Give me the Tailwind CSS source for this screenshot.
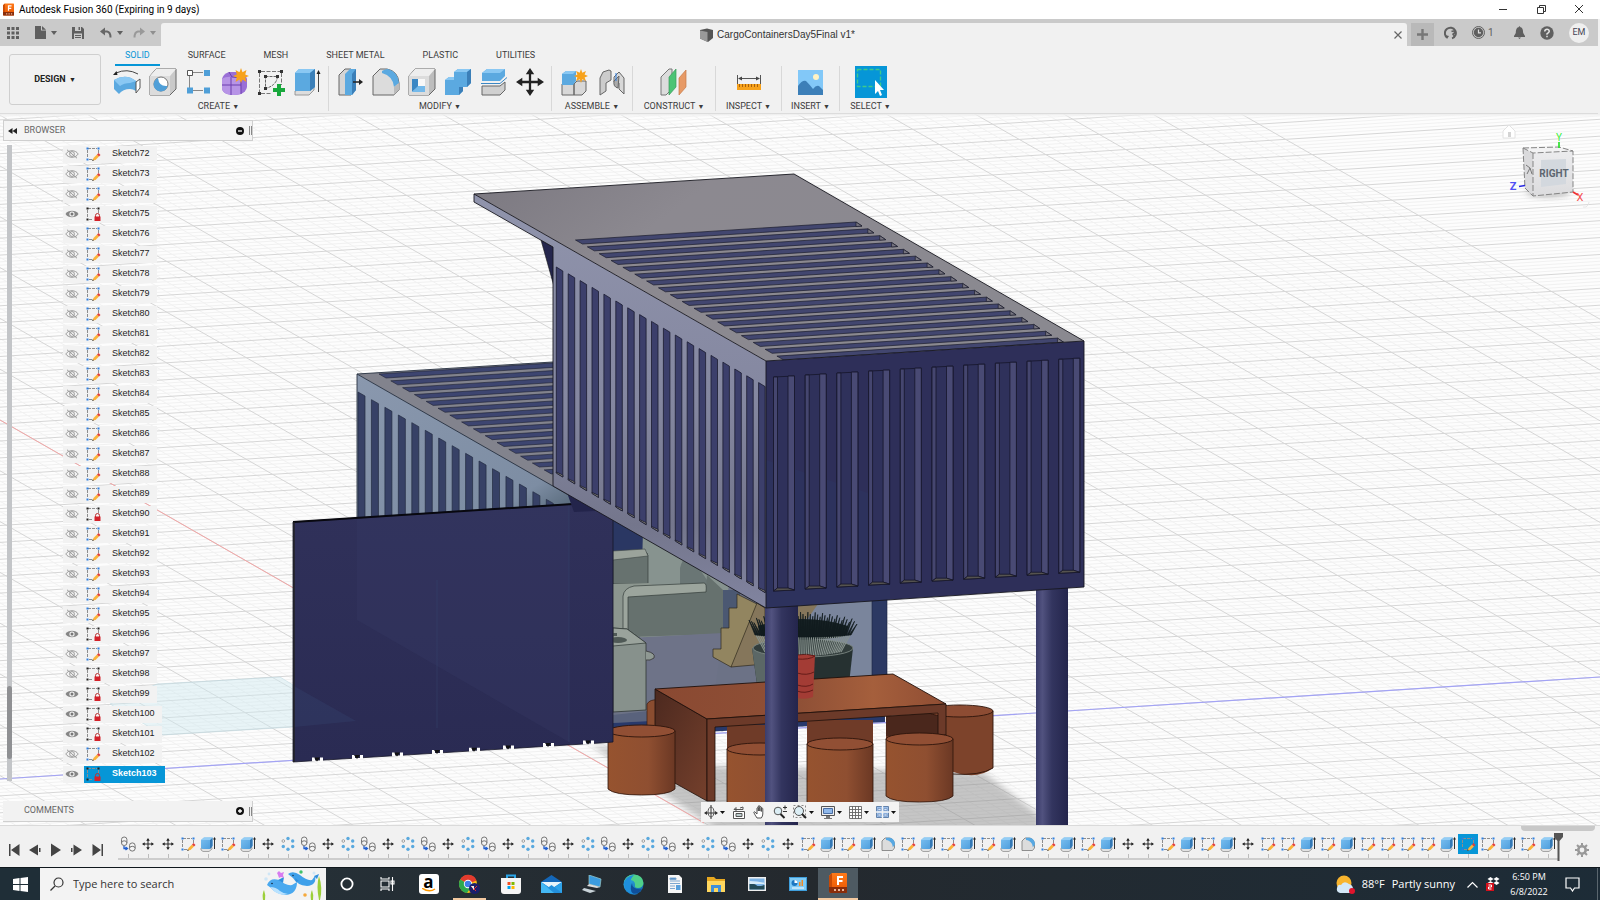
<!DOCTYPE html>
<html lang="en">
<head>
    <meta charset="UTF-8">
    <meta name="viewport" content="width=device-width, initial-scale=1.0">
    <title>Autodesk Fusion 360</title>
    <script src="https://cdn.jsdelivr.net/npm/@tailwindcss/browser@4"></script>
</head>
<body class="h-screen flex flex-col overflow-hidden bg-[#f1f1f1] font-['Roboto','Liberation_Sans',sans-serif] text-[9px] text-[#3c3c3c]">

    <!-- Icon sprite -->
    <svg width="0" height="0" class="absolute" aria-hidden="true">
        <defs>
            <linearGradient id="blueFace" x1="0" y1="0" x2="1" y2="1"><stop offset="0" stop-color="#7cc0f0"/><stop offset="1" stop-color="#4a9bdb"/></linearGradient>
            <linearGradient id="fusionOrange" x1="0" y1="0" x2="0" y2="1"><stop offset="0" stop-color="#ff7a1a"/><stop offset="1" stop-color="#e85400"/></linearGradient>
            <linearGradient id="edgeBlue" x1="0" y1="0" x2="1" y2="1"><stop offset="0" stop-color="#35c1f1"/><stop offset="1" stop-color="#0c59a4"/></linearGradient>

            <symbol id="fusion" viewBox="0 0 18 20">
                <path d="M3 0h14a1 1 0 0 1 1 1v18a1 1 0 0 1-1 1H2a2 2 0 0 1-2-2V3z" fill="url(#fusionOrange)"/>
                <path d="M0 14h18v5a1 1 0 0 1-1 1H2a2 2 0 0 1-2-2z" fill="#8a2d0a"/>
                <path d="M0 3l3-3v14H0z" fill="#c94a05"/>
                <path d="M8 3h6v2h-4v2h3.500v2H10v3H8z" fill="#fff"/>
                <path d="M5 16h2v2H5zM9 16h2v2H9zM13 16h2v2h-2z" fill="#e8b79c"/>
            </symbol>
            <symbol id="sketch" viewBox="0 0 16 16">
                <path d="M3 2.500h9M2.500 4v8M4 13.500h4M13.500 4v5" stroke="#8d8d8d" fill="none" stroke-dasharray="3 1"/>
                <path d="M1.500 1.500h2v2h-2zM12.500 1.500h2v2h-2zM1.500 12.500h2v2h-2z" fill="#2f7fe0"/>
                <path d="M7.500 14.500l1-2.500 3.500-3.500 2 2-3.500 3.500z" fill="#fbb43a"/>
                <path d="M12 8.500l1.500-1.500 2 2-1.500 1.500z" fill="#e23c39"/>
                <path d="M7 15l.8-1.800 1.200 1.200z" fill="#444"/>
            </symbol>
            <symbol id="sketchLock" viewBox="0 0 16 16">
                <path d="M3 2.500h9M2.500 4v8M4 13.500h4M13.500 4v4" stroke="#8d8d8d" fill="none" stroke-dasharray="3 1"/>
                <path d="M1.500 1.500h2v2h-2zM12.500 1.500h2v2h-2zM1.500 12.500h2v2h-2z" fill="#222"/>
                <path d="M10.500 11V9.500a2 2 0 0 1 4 0V11" fill="none" stroke="#b33" stroke-width="1"/>
                <path d="M9.500 10.500h6v4.500h-6z" fill="#d4222a"/>
            </symbol>
            <symbol id="eye" viewBox="0 0 14 10">
                <path d="M.5 5C3 .6 11 .6 13.500 5 11 9.400 3 9.400.5 5z" fill="#858585"/>
                <circle cx="7" cy="5" r="2.600" fill="#f2f2f2"/><circle cx="7" cy="5" r="1.500" fill="#777"/>
            </symbol>
            <symbol id="eyeOff" viewBox="0 0 14 10">
                <path d="M.8 5C3.500 .6 10.500 .6 13.200 5 10.500 9.400 3.500 9.400 .8 5zM2 .8l10 8.400" fill="none" stroke="#939393" stroke-width=".9"/>
                <circle cx="7" cy="5" r="2.400" fill="none" stroke="#939393" stroke-width=".9"/>
            </symbol>
            <symbol id="extrude" viewBox="0 0 16 16">
                <path d="M1 12v2l2 1.500h6l3-2.500v-1.500z" fill="#e2e2e2" stroke="#777" stroke-width=".6"/>
                <path d="M1 4l3-2.500h8.500v8.500L10 13H2.500L1 12z" fill="url(#blueFace)"/>
                <path d="M10 13V4l2.500-2.500V10z" fill="#3579b5"/>
                <path d="M1 4l3-2.500h8.500L10 4z" fill="#93cdf5"/>
                <path d="M14.500 13V3" stroke="#333" fill="none"/><path d="M13 3.500l1.500-2.500L16 3.500z" fill="#222"/>
            </symbol>
            <symbol id="move" viewBox="0 0 16 16">
                <path d="M8 2v12M2 8h12" stroke="#222" stroke-width="1.300"/>
                <path d="M8 0l2.400 3.600H5.600zM8 16l2.400-3.600H5.600zM0 8l3.600-2.400v4.800zM16 8l-3.600-2.400v4.800z" fill="#222"/>
            </symbol>
            <symbol id="pattern" viewBox="0 0 16 16">
                <g fill="#5aa9de"><circle cx="8" cy="2.500" r="1.700"/><circle cx="12.700" cy="5" r="1.700"/><circle cx="12.700" cy="10.500" r="1.700"/><circle cx="8" cy="13.300" r="1.700"/><circle cx="3.300" cy="10.500" r="1.700"/></g>
                <circle cx="3.300" cy="5" r="1.300" fill="#fff" stroke="#888" stroke-width=".8"/>
            </symbol>
            <symbol id="copy" viewBox="0 0 16 16">
                <g fill="#f4f4f4" stroke="#666" stroke-width=".9"><path d="M1.500 3.500a2.700 2.500 0 0 1 5.400 0v3.500a2.700 2.500 0 0 1-5.400 0z"/><path d="M9.500 9.500a2.800 2.600 0 0 1 5.600 0v3a2.800 2.600 0 0 1-5.600 0z"/><path d="M1.500 7a2.700 2.200 0 0 1 5.400 0M9.500 12.500a2.800 2.200 0 0 1 5.600 0"/></g>
                <path d="M4 10v2.500h3M5.500 11l2 1.500-2 1.500" stroke="#1f5fd0" fill="none" stroke-width="1.300"/>
            </symbol>
            <symbol id="fillet" viewBox="0 0 16 16">
                <path d="M2 14V5l3-3h4c3 0 5.500 3 5.500 6.500V12l-2 2.500H2z" fill="#dcdcdc" stroke="#777" stroke-width=".8"/>
                <path d="M6 1.800h3.500c3.500.4 5.500 3 5.500 7l-2.200 2.400C12.500 7 10 4.500 6 4z" fill="#57a8e2"/>
            </symbol>
        </defs>
    </svg>

    <!-- Window title bar -->
    <header class="h-[19px] shrink-0 bg-white flex items-center pl-[3px] pr-[15px] text-black text-[10px]">
        <svg class="w-[11px] h-[13px]"><use href="#fusion"/></svg>
        <h1 class="ml-[5px]">Autodesk Fusion 360 (Expiring in 9 days)</h1>
        <div class="ml-auto flex items-center gap-[26px]">
            <button aria-label="Minimize"><svg class="w-3 h-3" viewBox="0 0 12 12"><path d="M2 5.500h8" stroke="#333"/></svg></button>
            <button aria-label="Restore"><svg class="w-3 h-3" viewBox="0 0 12 12"><path d="M2.500 3.500h6v6h-6zM4.500 3V1.500h6v6H9" fill="none" stroke="#333"/></svg></button>
            <button aria-label="Close"><svg class="w-3 h-3" viewBox="0 0 12 12"><path d="M2 1l8 8M10 1l-8 8" stroke="#333"/></svg></button>
        </div>
    </header>

    <!-- Quick access + document tab -->
    <div class="h-[27px] shrink-0 bg-[#cacaca] flex mr-[2px]">
        <div class="w-[161px] flex items-center pl-[7px] text-[#5f5f5f]">
            <button aria-label="Data panel" class="w-[12px]"><svg class="w-3 h-3" viewBox="0 0 12 12" fill="currentColor"><path d="M0 0h3v3H0zM4.500 0h3v3h-3zM9 0h3v3H9zM0 4.500h3v3H0zM4.500 4.500h3v3h-3zM9 4.500h3v3H9zM0 9h3v3H0zM4.500 9h3v3h-3zM9 9h3v3H9z"/></svg></button>
            <button aria-label="File" class="ml-[15px] flex items-center gap-[5px]"><svg class="w-[12px] h-[13px]" viewBox="0 0 12 13" fill="currentColor"><path d="M1 0h6v4.500h5V13H1zM8 0l4 3.700H8z"/></svg><svg class="w-[6px] h-1" viewBox="0 0 6 4" fill="currentColor"><path d="M0 0h6L3 4z"/></svg></button>
            <button aria-label="Save" class="ml-[15px]"><svg class="w-[12px] h-3" viewBox="0 0 12 12"><path d="M0 0h10l2 2v10H0z" fill="#5f5f5f"/><path d="M3 0h6v4H3zM2 6.500h8V12H2z" fill="#cacaca"/><path d="M6.500 0h1.500v3H6.500zM3 8h6v1H3zM3 10h6v1H3z" fill="#5f5f5f"/></svg></button>
            <button aria-label="Undo" class="ml-4 flex items-center gap-[5px]"><svg class="w-3 h-3" viewBox="0 0 12 12"><path d="M3 4.500h4q3.500.5 3.500 6" fill="none" stroke="#666" stroke-width="2"/><path d="M0 4.500L5 .5v8z" fill="#666"/></svg><svg class="w-[6px] h-1" viewBox="0 0 6 4" fill="currentColor"><path d="M0 0h6L3 4z"/></svg></button>
            <button aria-label="Redo" class="ml-[10px] flex items-center gap-[5px] text-[#8f8f8f]"><svg class="w-3 h-3" viewBox="0 0 12 12"><path d="M9 4.500H5Q1.500 5 1.500 10.500" fill="none" stroke="#999" stroke-width="2"/><path d="M12 4.500L7 .5v8z" fill="#999"/></svg><svg class="w-[6px] h-1" viewBox="0 0 6 4" fill="currentColor"><path d="M0 0h6L3 4z"/></svg></button>
        </div>
        <div class="flex-1 mt-1 rounded-t-[3px] bg-[#f1f1f1] flex items-center relative">
            <div class="flex-1 flex items-center justify-center gap-1 text-[10px] text-[#333] font-['Liberation_Sans',sans-serif]">
                <svg class="w-[13px] h-[14px]" viewBox="0 0 13 14"><path d="M0 2l7-1.500 6 1.500v8l-5 4-8-3.500z" fill="#555"/><path d="M0 2.500l7.500 1.500V14L0 10.500z" fill="#9a9a9a"/></svg>
                <span>CargoContainersDay5Final v1*</span>
            </div>
            <button aria-label="Close document" class="mr-[5px]"><svg class="w-2 h-2" viewBox="0 0 8 8"><path d="M.5.5l7 7M7.500.5l-7 7" stroke="#666" stroke-width="1.200"/></svg></button>
        </div>
        <button aria-label="New document" class="ml-1 mt-1 w-[23px] bg-[#b9b9b9] flex items-center justify-center"><svg class="w-[11px] h-[11px]" viewBox="0 0 11 11"><path d="M5.500 0v11M0 5.500h11" stroke="#777" stroke-width="2.400"/></svg></button>
        <div class="flex items-center w-[164px] pl-[10px] pr-[9px] text-[#5f5f5f]">
            <button aria-label="Extensions"><svg class="w-[14px] h-[14px]" viewBox="0 0 14 14"><path d="M3 11.500A5.500 5.500 0 1 1 8 12.400" fill="none" stroke="#5f5f5f" stroke-width="2"/><path d="M7.500 5.500Q10.500 4 10.500 6.500 10.500 8 8.500 8 11 9 10 11.500" fill="none" stroke="#5f5f5f" stroke-width="1.600"/><path d="M1 9l4 1-2 3z" fill="#5f5f5f"/></svg></button>
            <button aria-label="Job status" class="ml-[14px] flex items-center gap-[3px] text-[10px]"><svg class="w-[13px] h-[13px]" viewBox="0 0 13 13"><circle cx="6.500" cy="6.500" r="6" fill="none" stroke="#5f5f5f"/><circle cx="6.500" cy="6.500" r="4.700" fill="#5f5f5f"/><path d="M6.500 3.500v3.300H9" fill="none" stroke="#ddd" stroke-width="1.200"/></svg>1</button>
            <button aria-label="Notifications" class="ml-5"><svg class="w-[11px] h-[13px]" viewBox="0 0 11 13" fill="#5f5f5f"><path d="M5.500 0l1 1.300C9 2 9 4.500 9.200 7L11 10v1H0v-1l1.800-3C2 4.500 2 2 4.500 1.300zM4 11.500h3L5.500 13z"/></svg></button>
            <button aria-label="Help" class="ml-[15px]"><svg class="w-[14px] h-[14px]" viewBox="0 0 14 14"><circle cx="7" cy="7" r="6.700" fill="#5f5f5f"/><path d="M4.700 5.500Q5 3.300 7 3.300T9.300 5.300Q9.300 6.500 7 7.800V8.800M7 9.800v1.500" fill="none" stroke="#e2e2e2" stroke-width="1.500"/></svg></button>
            <button class="ml-auto w-[20px] h-[20px] rounded-full bg-[#efefef] text-[9px] text-[#445]">EM</button>
        </div>
    </div>

    <!-- Ribbon -->
    <section class="h-[68px] shrink-0 flex border-b border-[#dcdcdc] mr-[2px]">
        <button class="ml-[9px] mt-2 w-[92px] h-[51px] border border-[#cfcfcf] rounded-[3px] text-[9px] font-bold text-[#222]">DESIGN <span class="ml-px text-[7px]">▼</span></button>
        <div class="ml-2">
            <nav class="ml-[6px] h-5 flex gap-[18px]">
                <a href="#" class="px-[10px] h-5 leading-[18px] border-b-2 border-[#0696d7] text-[#0696d7]">SOLID</a>
                <a href="#" class="px-[10px] leading-[18px]">SURFACE</a>
                <a href="#" class="px-[10px] leading-[18px]">MESH</a>
                <a href="#" class="px-[10px] leading-[18px]">SHEET METAL</a>
                <a href="#" class="px-[10px] leading-[18px]">PLASTIC</a>
                <a href="#" class="px-[10px] leading-[18px]">UTILITIES</a>
            </nav>
            <div class="flex h-[45px] text-center">
                <div class="w-[220px] border-r border-[#d8d8d8]">
                    <div class="h-8 flex items-center">
                        <button aria-label="Revolve" class="w-9 flex justify-center"><svg class="w-7 h-7" viewBox="0 0 28 28"><path d="M1 12q12-7 22 1v10q-3-2-6-2-7 0-11 5l-5-5z" fill="#5ba9e0"/><path d="M1 12q12-7 22 1l-6 2q-6 0-10 3z" fill="#8ac8f3"/><path d="M23 14l4-3v9l-4 5z" fill="#fff" stroke="#555"/><path d="M3 5q11-5 22 1" fill="none" stroke="#444"/><path d="M0 7l3.500-4 1 4z" fill="#222"/></svg></button>
                        <button aria-label="Hole" class="w-9 flex justify-center"><svg class="w-7 h-7" viewBox="0 0 28 28"><path d="M1 8l6-7h20v20l-6 6H1z" fill="#c9c9c9" stroke="#666"/><path d="M1 8h20v19H1z" fill="#dcdcdc"/><path d="M1 8l6-7h20l-6 7z" fill="#eee"/><circle cx="12" cy="16" r="7" fill="#fff" stroke="#777"/><path d="M9 10a7 7 0 1 0 9.500 8Q10 19 9 10z" fill="#4f9fd8"/></svg></button>
                        <button aria-label="Rectangular pattern" class="w-9 flex justify-center"><svg class="w-7 h-7" viewBox="0 0 28 28"><path d="M8 4.500h10M4.500 8v12M8 22.500h10" stroke="#888"/><path d="M2.500 2.500h5v5h-5z" fill="#fff" stroke="#555"/><path d="M19 2h6v6h-6zM2 19.500h6v6H2zM19 19.500h6v6h-6z" fill="#4f9fd8"/></svg></button>
                        <button aria-label="Create form" class="w-9 flex justify-center"><svg class="w-7 h-7" viewBox="0 0 28 28"><path d="M1 11q1-5 7-7h9q8 1 9 7v8q-1 5-6 7-8 2-14 0-5-2-5-6z" fill="#9a6fd6"/><path d="M1 11q5-4 18-1l1 16q-8 2-14 0-5-2-5-6z" fill="#b794e6"/><path d="M1 17h19M10 9v18M20 10v16M8 4l3 5 10 1" fill="none" stroke="#6c3fae"/><path d="M20 0l1.500 4.200L25.500 2l-1.300 4.500L28 8l-3.800 1.500L25.500 14l-4-2.500L20 15l-1.500-3.500-4 2.500 1.300-4.500L12 8l3.800-1.500L14.500 2l4 2.200z" fill="#f7a21b"/></svg></button>
                        <button aria-label="Create sketch" class="w-9 flex justify-center"><svg class="w-7 h-7" viewBox="0 0 28 28"><path d="M4 3.500h19M2.500 5v19M4 25.500h10M24.500 5v12" fill="none" stroke="#777" stroke-dasharray="4 1.500"/><path d="M8.500 8.500h12q-1 9-12 12z" fill="none" stroke="#666" stroke-dasharray="3 1"/><path d="M1 2h3v3H1zM23 2h3v3h-3zM1 24h3v3H1zM7 7h3v3H7zM19 7h3v3h-3zM7 19h3v3H7z" fill="#333"/><path d="M20 16h4v4h4v4h-4v4h-4v-4h-4v-4h4z" fill="#18a83c"/></svg></button>
                        <button aria-label="Extrude" class="w-9 flex justify-center"><svg class="w-7 h-7" viewBox="0 0 28 28"><path d="M2 23v4h14l5-5v-4z" fill="#ddd" stroke="#888" stroke-width=".8"/><path d="M2 5l4-4h16v18l-5 4H2z" fill="#5ba9e0"/><path d="M2 5l4-4h16l-5 4z" fill="#8ac8f3"/><path d="M17 5l5-4v18l-5 4z" fill="#3b7fb8"/><path d="M25.500 24V4" stroke="#444"/><path d="M23.500 6l2-4 2 4z" fill="#222"/></svg></button>
                    </div>
                    <button class="h-[17px] leading-[17px]">CREATE <span class="text-[7px]">▼</span></button>
                </div>
                <div class="w-[223px] border-r border-[#d8d8d8]">
                    <div class="h-8 flex items-center pl-[3px]">
                        <button aria-label="Press pull" class="w-9 flex justify-center"><svg class="w-7 h-7" viewBox="0 0 28 28"><path d="M3 7l6-6h6v26H3z" fill="#d5d5d5" stroke="#666"/><path d="M9 6l5-5h6v21l-4 5H9z" fill="#5ba9e0"/><path d="M16 6l4-5v21l-4 5z" fill="#3b7fb8"/><path d="M17 14h8" stroke="#222" stroke-width="1.500"/><path d="M23 11l4 3-4 3z" fill="#222"/></svg></button>
                        <button aria-label="Fillet" class="w-9 flex justify-center"><svg class="w-7 h-7" viewBox="0 0 28 28"><path d="M1 8l7-7h7q11 2 12 14v7l-5 5H1z" fill="#dcdcdc" stroke="#666"/><path d="M10 3q3-2 6-2 10 3 11 14l-5 4Q21 8 10 5z" fill="#5ba9e0"/><path d="M22 19l5-4v7l-5 5z" fill="#bbb"/></svg></button>
                        <button aria-label="Shell" class="w-9 flex justify-center"><svg class="w-7 h-7" viewBox="0 0 28 28"><path d="M1 8l6-7h20v20l-6 6H1z" fill="#bdbdbd" stroke="#666"/><path d="M1 8h20v19H1z" fill="#dcdcdc"/><path d="M1 8l6-7h20l-6 7z" fill="#eee"/><path d="M4 11h13v13H4z" fill="#f8f8f8"/><path d="M4 11h6v8l-6 5z" fill="#3b87c4"/><path d="M4 24l6-6h7v6z" fill="#74b9ea"/></svg></button>
                        <button aria-label="Combine" class="w-9 flex justify-center"><svg class="w-7 h-7" viewBox="0 0 28 28"><path d="M1 12l4-3h5V4l4-3h13v14l-4 4h-4v4l-4 4H1z" fill="#5ba9e0"/><path d="M10 4l4-3h13l-4 3zM1 12l4-3h5v3z" fill="#8ac8f3"/><path d="M23 4l4-3v14l-4 4zM15 19h4v4l-4 4z" fill="#3b7fb8"/></svg></button>
                        <button aria-label="Split body" class="w-9 flex justify-center"><svg class="w-7 h-7" viewBox="0 0 28 28"><path d="M2 5l5-4h18v7l-5 5H2z" fill="#5ba9e0"/><path d="M2 5l5-4h18l-5 4z" fill="#8ac8f3"/><path d="M1 15.500h19l7-6" fill="none" stroke="#3b87c4"/><path d="M2 18h18l5-4v8l-5 5H2z" fill="#d0d0d0" stroke="#666"/></svg></button>
                        <button aria-label="Move" class="w-9 flex justify-center"><svg class="w-7 h-7"><use href="#move"/></svg></button>
                    </div>
                    <button class="h-[17px] leading-[17px]">MODIFY <span class="text-[7px]">▼</span></button>
                </div>
                <div class="w-[81px] border-r border-[#d8d8d8]">
                    <div class="h-8 flex items-center pl-1">
                        <button aria-label="New component" class="w-9 flex justify-center"><svg class="w-7 h-7" viewBox="0 0 28 28"><path d="M2 16h12v11H2zM14 16l3-3h9v10l-4 4h-8z" fill="#d8d8d8" stroke="#666"/><path d="M2 6l4-3h10v10l-3 4H2z" fill="#5ba9e0"/><path d="M2 6l4-3h10l-3 3z" fill="#8ac8f3"/><path d="M21 1l1.300 3.700L26 3l-1.400 3.500L28 8l-3.400 1.500L26 13l-3.700-1.700L21 15l-1.300-3.700L16 13l1.400-3.500L14 8l3.400-1.500L16 3l3.700 1.700z" fill="#f7a21b"/></svg></button>
                        <button aria-label="Joint" class="w-9 flex justify-center ml-[2px]"><svg class="w-7 h-7" viewBox="0 0 28 28"><path d="M2 10l3-6 6-2 2 1v9l-5 3v8l-6 4z" fill="#ccc" stroke="#666"/><path d="M16 9l5-5 5 6v16l-5-5v-6l-5-1z" fill="#d8d8d8" stroke="#666"/><path d="M16 13q-1 6 4 7l1-12z" fill="#aaa" stroke="#666"/><path d="M18 5v8" stroke="#2f7fe0"/></svg></button>
                    </div>
                    <button class="h-[17px] leading-[17px]">ASSEMBLE <span class="text-[7px]">▼</span></button>
                </div>
                <div class="w-[83px] border-r border-[#d8d8d8]">
                    <div class="h-8 flex items-center justify-center">
                        <button aria-label="Offset plane"><svg class="w-7 h-7" viewBox="0 0 28 28"><path d="M1 9l8-8h3v20l-6 6H1z" fill="#dcdcdc" stroke="#777"/><path d="M9 9l7-8v18l-7 8z" fill="#4cc475" stroke="#3a9b5a" stroke-width=".7"/><path d="M19 10l7-8v17l-7 8z" fill="#e79a66" stroke="#c67a48" stroke-width=".7"/></svg></button>
                    </div>
                    <button class="h-[17px] leading-[17px]">CONSTRUCT <span class="text-[7px]">▼</span></button>
                </div>
                <div class="w-[66px] border-r border-[#d8d8d8]">
                    <div class="h-8 flex items-center justify-center">
                        <button aria-label="Measure"><svg class="w-6 h-6" viewBox="0 0 24 24"><path d="M.5 5v9M23.500 5v9M2 8.500h20" stroke="#555"/><path d="M1 8.500l4-2v4zM23 8.500l-4-2v4z" fill="#444"/><path d="M0 14h24v6H0z" fill="#f7a21b"/><path d="M2.500 14v3M5.500 14v3M8.500 14v3M11.500 14v3M14.500 14v3M17.500 14v3M20.500 14v3" stroke="#a8600a"/></svg></button>
                    </div>
                    <button class="h-[17px] leading-[17px]">INSPECT <span class="text-[7px]">▼</span></button>
                </div>
                <div class="w-[58px] border-r border-[#d8d8d8]">
                    <div class="h-8 flex items-center justify-center">
                        <button aria-label="Insert canvas"><svg class="w-[25px] h-[25px]" viewBox="0 0 25 25"><path d="M0 0h25v25H0z" fill="#82c8f8"/><path d="M0 16q4-6 8-5 4 4 7 8 3-4 6-3l4 4v5H0z" fill="#3c7fb8"/><circle cx="18" cy="7" r="3" fill="#fff3c4"/></svg></button>
                    </div>
                    <button class="h-[17px] leading-[17px]">INSERT <span class="text-[7px]">▼</span></button>
                </div>
                <div class="w-[61px]">
                    <div class="h-8 flex items-center justify-center">
                        <button aria-label="Select" class="bg-[#0696d7] w-8 h-8"><svg class="w-8 h-8" viewBox="0 0 32 32"><path d="M2.500 3.500h23v17h-23z" fill="none" stroke="#3ec98b" stroke-width="1.400" stroke-dasharray="4 2"/><path d="M20 14v14l3-3 2 5 2-1-2-5h4z" fill="#fff"/></svg></button>
                    </div>
                    <button class="h-[17px] leading-[17px]">SELECT <span class="text-[7px]">▼</span></button>
                </div>
            </div>
        </div>
    </section>

    <!-- Model canvas -->
    <main class="flex-1 min-h-0 relative bg-[#fdfdfd] overflow-hidden">
        <svg class="absolute inset-0 w-full h-full" viewBox="0 114 1600 711" preserveAspectRatio="xMidYMin slice" role="img" aria-label="Container house model">
            <defs>
                <linearGradient id="fade" x1="0" y1="0" x2="0" y2="1"><stop offset="0" stop-color="#ececec"/><stop offset="1" stop-color="#fdfdfd" stop-opacity="0"/></linearGradient>
                <linearGradient id="roofG" x1="0" y1="0" x2="1" y2=".4"><stop offset="0" stop-color="#7b7880"/><stop offset=".35" stop-color="#8c8990"/><stop offset="1" stop-color="#8a8990"/></linearGradient>
                <linearGradient id="sideG" x1="0" y1="0" x2="0" y2="1"><stop offset="0" stop-color="#9094ac"/><stop offset=".5" stop-color="#8487a0"/><stop offset=".8" stop-color="#74768c"/><stop offset="1" stop-color="#8184a0"/></linearGradient>
                <linearGradient id="side2G" x1="0" y1="0" x2="1" y2="1"><stop offset="0" stop-color="#8a98ae"/><stop offset=".8" stop-color="#7d8da3"/><stop offset="1" stop-color="#4e6070"/></linearGradient>
                <linearGradient id="wallG" x1="0" y1="0" x2="0" y2="1"><stop offset="0" stop-color="#30315a"/><stop offset="1" stop-color="#2a2b53"/></linearGradient>
                <linearGradient id="colG" x1="0" y1="0" x2="1" y2="0"><stop offset="0" stop-color="#3b3d6b"/><stop offset=".2" stop-color="#51527f"/><stop offset=".5" stop-color="#33355f"/><stop offset="1" stop-color="#24254c"/></linearGradient>
                <linearGradient id="stoolG" x1="0" y1="0" x2="1" y2="0"><stop offset="0" stop-color="#96532f"/><stop offset=".6" stop-color="#8f4f31"/><stop offset="1" stop-color="#6b3824"/></linearGradient>
                <linearGradient id="tableG" x1="0" y1="0" x2="1" y2="0"><stop offset="0" stop-color="#8a4932"/><stop offset=".5" stop-color="#8f5036"/><stop offset=".75" stop-color="#a55f3c"/><stop offset="1" stop-color="#8f4d33"/></linearGradient>
                <linearGradient id="legG" x1="0" y1="0" x2="1" y2="1"><stop offset="0" stop-color="#4c291f"/><stop offset="1" stop-color="#75402c"/></linearGradient>
                <linearGradient id="cubeG" x1="0" y1="0" x2="0" y2="1"><stop offset="0" stop-color="#ececee"/><stop offset="1" stop-color="#dcdcde"/></linearGradient>
                <filter id="soft" x="-20%" y="-50%" width="140%" height="200%"><feGaussianBlur stdDeviation="3"/></filter>
                <clipPath id="roofClip"><path d="M474 194L794 174L1084 341L766 361z"/></clipPath>
                <clipPath id="sideClip"><path d="M553 230L766 361V608L553 486z"/></clipPath>
                <clipPath id="backRoofClip"><path d="M357 374L553 362V488z"/></clipPath>
                <clipPath id="backSideClip"><path d="M357 374L572 497V504L357 519z"/></clipPath>
                <clipPath id="sceneClip"><rect x="0" y="114" width="1600" height="720"/></clipPath>
            </defs>

            <g clip-path="url(#sceneClip)" fill="none">
                <path id="gridMinor" stroke="#f1f1f1"/>
                <path id="gridMajor" stroke="#d6d6d6"/>
                <path d="M110 704L157 684L280 677L293 685V727L163 735z" fill="#cfe8f0" fill-opacity=".45" stroke="#bcd6de" stroke-width=".5"/>
                <path d="M0 779L1600 677" stroke="#a3a3f5" stroke-width="1.200"/>
            </g>
            <path d="M590 744L700 766L983 772L1040 816L1040 835H724z" fill="#8e8e8e" fill-opacity=".5" filter="url(#soft)"/>
            <path d="M0 420L704 823" fill="none" stroke="#f2a6a6"/>

            <!-- back container -->
            <path d="M357 374L553 362V488z" fill="#82838d"/>
            <g id="backRoofSlots" clip-path="url(#backRoofClip)" fill="#3d4570" stroke="#1d2030" stroke-width=".6"></g>
            <path d="M357 374L572 497V504L357 519z" fill="url(#side2G)"/>
            <g id="backSideSlots" clip-path="url(#backSideClip)" fill="#374166" stroke="#222b40" stroke-width=".7"></g>
            <path d="M357 519V374L572 497M357 374L553 362" fill="none" stroke="#26303f" stroke-width=".9"/>

            <!-- interior -->
            <path d="M612 510H887V712L612 728z" fill="#6c7286"/>
            <path d="M613 515H646V556H613z" fill="#2a3763"/>
            <path d="M643 530L730 565L725 640H640z" fill="#87938f"/>
            <path d="M680 568Q685 545 707 580V600H680z" fill="#6a7675"/>
            <path d="M613 555L644 552Q648 552 648 556V584H613z" fill="#67726f" stroke="#333c3a" stroke-width=".7"/>
            <path d="M613 551L645 549L648 556L613 560z" fill="#9ba39b" stroke="#3d4543" stroke-width=".6"/>
            <path d="M613 584L650 583L660 590L628 632H613z" fill="#8c968f"/>
            <path d="M707 575L723 590V634L628 637L623 595L706 590z" fill="#66716e"/>
            <path d="M623 637V596Q624 588 634 586L704 583Q707 583 706 592L628 597V637z" fill="#9ca59d" stroke="#333c3a" stroke-width=".7"/>
            <path d="M723 590H740V632H723z" fill="#4b5872"/>
            <path d="M628 638L723 633L715 690H640z" fill="#6e7388"/>
            <path d="M613 628L627 629L646 643V710L613 712z" fill="#87918c" stroke="#2e3634" stroke-width=".8"/>
            <path d="M613 628L627 629L646 643L613 646z" fill="#9aa39c" stroke="#2e3634" stroke-width=".7"/>
            <ellipse cx="618" cy="640" rx="9" ry="3" fill="#4f5956"/><path d="M613 633h4v3h-4z" fill="#4f5956"/>
            <path d="M646 651Q656 653 654 658Q650 661 646 660" fill="#8f9993" stroke="#333" stroke-width=".8"/>
            <path d="M613 715L648 711V721L613 723z" fill="#59627c"/>
            <path d="M613 723L885 708V722L613 737z" fill="#28396b"/>
            <path d="M790 600H872V680H790z" fill="#747e95"/>
            <path d="M800 605L872 600V678H800z" fill="#7a859c"/>
            <path d="M872 596H887V680H872z" fill="#2c3963" stroke="#1b2440" stroke-width=".6"/>
            <path d="M737 594L765 608V640L731 667L713 657V649H721V628H729V608H737z" fill="#928560" stroke="#2f2a1d" stroke-width=".7"/>
            <path d="M757 603L731 667L765 664V608z" fill="#85765b" stroke="#2f2a1d" stroke-width=".7"/>
            <path d="M797 606L818 604L808 618L797 622z" fill="#85765b"/>
            <path d="M752 648L757 684H849L853 648z" fill="#263131"/>
            <path d="M752 648L757 684H768V650z" fill="#5b6766"/>
            <ellipse cx="803" cy="648" rx="50" ry="9" fill="#323d3c" stroke="#85908c" stroke-width=".8"/>
            <g id="plant" fill="none"></g>

            <!-- stools behind the table -->
            <path d="M647 704Q650 699 658 700V730H647z" fill="#8a4d30" stroke="#3a1c10" stroke-width=".7"/>
            <path d="M727 725H766V750H727zM807 720H873V745H807zM886 716H945V756H886z" fill="#6f3b28"/>
            <path d="M886 716L938 712V736H886z" fill="#4a271c"/>
            <path d="M946 711V769Q975 782 993 768V711z" fill="#7d432b"/>
            <ellipse cx="960" cy="711" rx="33" ry="6" fill="#8d4c33" stroke="#2c140b" stroke-width=".9"/>
            <path d="M993 711V768Q980 776 952 774" fill="none" stroke="#2c140b" stroke-width=".9"/>

            <!-- table -->
            <path d="M655 689L707 719V801L655 772z" fill="url(#legG)" stroke="#20100a" stroke-width=".8"/>
            <path d="M655 689L893 674L946 704L707 719z" fill="url(#tableG)" stroke="#20100a" stroke-width=".9"/>
            <path d="M707 719L946 704V735H938V713L715 727V801H707z" fill="#6c3a29" stroke="#20100a" stroke-width=".8"/>
            <path d="M797 655H815L813 697Q806 700 797 698z" fill="#a33c35"/>
            <path d="M797 655q10-2 18 1-6 4-18 3zM797 673q10 3 17-1M797 685q10 3 16-1M797 691q8 3 16-1" fill="none" stroke="#5c1714" stroke-width=".9"/>

            <!-- front stools -->
            <g id="stools"></g>

            <!-- columns -->
            <path d="M765 604H798V830H765z" fill="url(#colG)"/>
            <path d="M1036 586H1068V830H1036z" fill="url(#colG)"/>

            <!-- sliding wall -->
            <path d="M293 522L573 504L590 502L613 517V742L600 743L293 762z" fill="url(#wallG)" stroke="#141426" stroke-width=".8"/>
            <path d="M357 518L569 505V742L357 620z" fill="#373c68" fill-opacity=".3"/>
            <path d="M294 686L356 721L294 727z" fill="#34406b" fill-opacity=".4"/>
            <path d="M437 580V728M569 505V742" stroke="#33456e" stroke-opacity=".5"/>
            <path d="M293 522L573 504" stroke="#08080f" stroke-width="2"/>
            <path d="M294 522V762" stroke="#222" stroke-width="1.400"/>
            <g id="wheels"></g>

            <!-- upper container -->
            <path d="M566 490L595 506V511L574 512z" fill="#23244b"/>
            <path d="M541 240L555 248V290z" fill="#25264d" stroke="#111" stroke-width=".6"/>
            <path d="M474 194L766 361V608L553 486V247L474 202z" fill="url(#sideG)"/>
            <g id="sideSlots" clip-path="url(#sideClip)" fill="#3c3f6b" stroke="#1b1c30" stroke-width=".8"></g>
            <path d="M474 194L794 174L1084 341L766 361z" fill="url(#roofG)"/>
            <g id="roofSlots" clip-path="url(#roofClip)" fill="#42466f" stroke="#1b1c2c" stroke-width=".7"></g>
            <path d="M766 361L1084 341V587L766 608z" fill="#2e2f59"/>
            <path d="M766 460L890 500V600L766 608z" fill="#2d4570" fill-opacity=".18"/>
            <g id="frontSlots" stroke="#15152a" stroke-width=".8"></g>
            <path d="M474 202V194L794 174L1084 341V587L766 608L553 486V247zM474 194L766 361M766 608V361L1084 341" fill="none" stroke="#17171f" stroke-width=".9"/>

            <!-- view cube -->
            <ellipse cx="1548" cy="192" rx="22" ry="5" fill="#888" fill-opacity=".55" filter="url(#soft)"/>
            <path d="M1503 131l6-6 6 6v7h-12z" fill="#fff" stroke="#e2e2e2"/><path d="M1508 132h3v5h-3z" fill="#d4d4d4"/>
            <path d="M1523 148L1533 153V196L1525 188z" fill="#dadadc"/>
            <path d="M1523 148L1559 147L1573 151L1533 153z" fill="#f2f2f3"/>
            <path d="M1533 153L1573 151V192L1533 196z" fill="url(#cubeG)"/>
            <path d="M1541 160L1566 159V184L1541 187z" fill="#d3d8de"/>
            <path d="M1523 148L1559 147L1573 151L1533 153zM1533 153V196L1573 192V151M1523 148L1525 188L1533 196" fill="none" stroke="#858585" stroke-dasharray="6 2"/>
            <path d="M1526 165l4 3-3 6M1530 168l2 6" fill="none" stroke="#777"/>
            <text x="1554" y="177" text-anchor="middle" fill="#5d6670" class="font-['Roboto',sans-serif] text-[10px] font-bold">RIGHT</text>
            <path d="M1559 142v6" stroke="#1fe01f" stroke-width="1.600"/><path d="M1519 186.500l6-1" stroke="#2a2ae0" stroke-width="1.600"/><path d="M1573 192l5 3" stroke="#f03030" stroke-width="1.800"/>
            <text x="1559" y="141" text-anchor="middle" fill="#3df03d" class="text-[10px]">Y</text>
            <text x="1513" y="190" text-anchor="middle" fill="#5050f5" class="text-[11px] font-bold">Z</text>
            <text x="1580" y="201" text-anchor="middle" fill="#f55050" class="text-[11px]">X</text>
            <path d="M1583 207q5 1 6-5" fill="none" stroke="#e8e8e8"/>
            <rect x="0" y="114" width="1600" height="4" fill="url(#fade)"/>
        </svg>

        <!-- Browser + comments -->
        <aside class="absolute inset-y-0 left-0 w-[253px] pl-[3px] pt-[6px] pb-[3px] flex flex-col">
            <div class="h-[21px] shrink-0 bg-[#f4f4f4] border border-[#cfcfcf] flex items-center pl-1">
                <button aria-label="Collapse browser"><svg class="w-[9px] h-[6px]" viewBox="0 0 9 6"><path d="M4.500 0v6L0 3zM9 0v6L4.500 3z" fill="#222"/></svg></button>
                <h2 class="ml-[7px] text-[#666]">BROWSER</h2>
                <button aria-label="Hide browser" class="ml-auto"><svg class="w-2 h-2" viewBox="0 0 8 8"><circle cx="4" cy="4" r="4" fill="#111"/><path d="M2 4h4" stroke="#fff" stroke-width="1.300"/></svg></button>
                <span class="ml-[5px] w-[3px] h-[9px] border-l border-r border-[#888]"></span>
            </div>
            <div class="flex-1 min-h-0 mt-[3px] flex overflow-hidden">
                <div class="ml-1 mt-px w-[5px] h-[636px] bg-[#c3c5c8] flex flex-col justify-end pb-[22px]"><div class="h-[73px] rounded-full bg-[#8f9093]"></div></div>
                <ul id="sketches" class="ml-[51px] font-['Liberation_Sans',sans-serif] text-[#222]"></ul>
            </div>
            <div class="h-[21px] shrink-0 bg-[#f2f2f2] border-b border-r border-[#cfcfcf] flex items-center pl-[21px]">
                <h2 class="text-[#666]">COMMENTS</h2>
                <button aria-label="Show comments" class="ml-auto"><svg class="w-2 h-2" viewBox="0 0 8 8"><circle cx="4" cy="4" r="4" fill="#111"/><path d="M2 4h4M4 2v4" stroke="#fff" stroke-width="1.300"/></svg></button>
                <span class="ml-[5px] w-[3px] h-[9px] border-l border-r border-[#888]"></span>
            </div>
        </aside>

        <!-- Navigation bar -->
        <div class="absolute bottom-[3px] left-1/2 -translate-x-1/2 h-5 w-[198px] bg-[#f3f3f3] flex items-center justify-between px-[3px]">
            <button aria-label="Orbit" class="flex items-center gap-[2px]"><svg class="w-[14px] h-[14px]" viewBox="0 0 14 14" fill="none" stroke="#333"><path d="M7 0v14M1 8h12"/><ellipse cx="7" cy="7" rx="3" ry="5" stroke="#555"/><path d="M0 8l3-2v4zM14 8l-3-2v4z" fill="#333" stroke="none"/></svg><svg class="w-[5px] h-[3px]" viewBox="0 0 5 3"><path d="M0 0h5L2.500 3z" fill="#111"/></svg></button>
            <button aria-label="Look at"><svg class="w-[14px] h-[13px]" viewBox="0 0 14 13" fill="none" stroke="#555"><path d="M1.500 5.500h11v7h-11z" fill="#fff"/><path d="M4 7.500h6v3H4z" fill="#bcc"/><path d="M2 3.500h9M2 3.500l2-2v4M11 3.500V1L8 2"/></svg></button>
            <button aria-label="Pan"><svg class="w-[13px] h-[14px]" viewBox="0 0 13 14"><path d="M4 13Q2 10 .8 7.500q0-1 1-.6L4 9V3q.7-1 1.300 0v3-5q.8-1 1.500 0v5-4q.8-1 1.500 0v4.500-3q.8-1 1.500 0V9q0 2-1.500 4z" fill="#fff" stroke="#444" stroke-width=".9"/></svg></button>
            <button aria-label="Zoom"><svg class="w-[14px] h-[14px]" viewBox="0 0 14 14"><circle cx="5" cy="6" r="3.800" fill="#dceef5" stroke="#555"/><path d="M7.500 9l4 4" stroke="#222" stroke-width="2"/><path d="M10 2.500h4M12 .5v4M10 6.500h4" stroke="#333"/></svg></button>
            <button aria-label="Fit" class="flex items-center gap-[2px]"><svg class="w-[14px] h-[14px]" viewBox="0 0 14 14"><path d="M.5.5h12v12H.5z" fill="none" stroke="#888" stroke-dasharray="2 2"/><circle cx="6" cy="6" r="4.500" fill="#dceef5" stroke="#555"/><path d="M9 9l4 4" stroke="#222" stroke-width="2"/></svg><svg class="w-[5px] h-[3px]" viewBox="0 0 5 3"><path d="M0 0h5L2.500 3z" fill="#111"/></svg></button>
            <button aria-label="Display settings" class="flex items-center gap-[2px]"><svg class="w-[14px] h-[13px]" viewBox="0 0 14 13"><path d="M.5.500h13v9H.5z" fill="#eee" stroke="#555"/><path d="M2.500 2.500h9v5h-9z" fill="#8fb8ea" stroke="#4a6ea5"/><path d="M5 10h4v2H5zM3 12h8v1H3z" fill="#777"/></svg><svg class="w-[5px] h-[3px]" viewBox="0 0 5 3"><path d="M0 0h5L2.500 3z" fill="#111"/></svg></button>
            <button aria-label="Grid and snaps" class="flex items-center gap-[2px]"><svg class="w-[13px] h-[13px]" viewBox="0 0 13 13"><path d="M.5.5h12v12H.5zM3.500 0v13M6.500 0v13M9.500 0v13M0 3.500h13M0 6.500h13M0 9.500h13" fill="#fff" stroke="#666" stroke-width=".9"/></svg><svg class="w-[5px] h-[3px]" viewBox="0 0 5 3"><path d="M0 0h5L2.500 3z" fill="#111"/></svg></button>
            <button aria-label="Viewports" class="flex items-center gap-[2px]"><svg class="w-[13px] h-[12px]" viewBox="0 0 13 12"><path d="M.5.5h12v11H.5z" fill="#9cc0ec" stroke="#6382aa"/><path d="M6.500 0v12M0 6h13" stroke="#f3f3f3" stroke-width="1.400"/><path d="M2 2.500h3v2H2zM8 2.500h3v2H8zM2 8h3v2H2zM8 8h3v2H8z" fill="#d4e4f8" stroke="#5878a8" stroke-width=".5"/></svg><svg class="w-[5px] h-[3px]" viewBox="0 0 5 3"><path d="M0 0h5L2.500 3z" fill="#111"/></svg></button>
        </div>
    </main>

    <!-- Timeline -->
    <section class="h-[42px] shrink-0 border-t border-[#dadada] flex relative">
        <div class="w-[118px] shrink-0 flex items-center gap-[7px] pl-2 pt-[6px] text-[#444]">
            <button aria-label="Go to start"><svg class="w-[13px] h-[14px]" viewBox="0 0 13 14" fill="currentColor"><path d="M1 1h1.500v12H1zM11.500 1v12L3 7z"/></svg></button>
            <button aria-label="Step back"><svg class="w-[14px] h-[14px]" viewBox="0 0 14 14" fill="currentColor"><path d="M10 1.500v11L1 7zM11 5h1.500v4H11z"/></svg></button>
            <button aria-label="Play"><svg class="w-[14px] h-[14px]" viewBox="0 0 14 14" fill="currentColor"><path d="M2 .5v13L12 7z"/></svg></button>
            <button aria-label="Step forward"><svg class="w-[14px] h-[14px]" viewBox="0 0 14 14" fill="currentColor"><path d="M3.500 1.500v11L12 7zM1 5h1.500v4H1z"/></svg></button>
            <button aria-label="Go to end"><svg class="w-[13px] h-[14px]" viewBox="0 0 13 14" fill="currentColor"><path d="M10.500 1H12v12h-1.500zM1.500 1v12L10 7z"/></svg></button>
        </div>
        <ul id="timeline" class="flex pt-2"></ul>
        <svg class="w-[9px] h-[28px] mt-[7px] -ml-1 shrink-0" viewBox="0 0 9 28"><path d="M0 0h9v4L5.500 8v20h-2V8L0 4z" fill="#555"/></svg>
        <button aria-label="Timeline settings" class="ml-auto mr-[11px] mt-[6px]"><svg class="w-[14px] h-[14px]" viewBox="0 0 14 14"><circle cx="7" cy="7" r="3.700" fill="none" stroke="#999" stroke-width="2.600"/><path d="M7 0v2.500M7 11.500V14M0 7h2.500M11.500 7H14M2 2l2 2M10 10l2 2M12 2l-2 2M4 10l-2 2" stroke="#999" stroke-width="2"/></svg></button>
        <div class="absolute top-0 right-[5px] w-[74px] h-[5px] rounded-b-sm bg-[#c8c8c8]"></div>
    </section>

    <!-- Windows taskbar -->
    <footer class="h-[33px] shrink-0 bg-linear-to-r from-[#26343c] via-[#24292e] to-[#1d2c37] border-t border-[#10181d] flex text-white font-['Open_Sans','Noto_Sans',sans-serif]">
        <button aria-label="Start" class="w-10 shrink-0 bg-[#1f2e37] flex items-center justify-center"><svg class="w-[15px] h-[15px]" viewBox="0 0 15 15"><path d="M0 2l6.500-1v6H0zM7.500 1L15 0v7H7.500zM0 8h6.500v6L0 13zM7.500 8H15v7l-7.500-1z" fill="#fff"/></svg></button>
        <label class="w-[286px] shrink-0 bg-[#f3f3f3] flex items-center pl-[10px] relative">
            <svg class="w-[14px] h-[14px]" viewBox="0 0 14 14"><circle cx="8.500" cy="5.500" r="4.500" fill="none" stroke="#333" stroke-width="1.200"/><path d="M5 9l-4.500 4.500" stroke="#333" stroke-width="1.200"/></svg>
            <input type="text" aria-label="Search" placeholder="Type here to search" class="ml-[9px] w-[150px] text-[11px] bg-transparent placeholder:text-[#333] outline-none">
            <svg class="ml-auto mr-[1px] w-[63px] h-8" viewBox="0 0 63 32">
                <path d="M5 17Q8 9 17 12Q24 18 30 17L35 14Q35 26 24 27Q14 26 9 20z" fill="#4aa9ef"/><path d="M8 19q6 0 10 4 4 3 8 3-7 2-13-2z" fill="#b8e2ff"/><path d="M26 6Q31 2 38 7Q45 13 50 12L53 8Q55 17 45 18Q35 17 31 10z" fill="#3fa0ea"/><path d="M52 8l5-2-2 5zM16 12l6-3-1 6zM34 14l-1-4 4 3z" fill="#2f8fde"/>
                <path d="M1 32q-1-6 1-10 2 5 1 10zM49 32q-1-6 1-10 2 5 1 10zM57 32q-3-14 0-24 4 12 1 24z" fill="#9ccf3a"/>
                <path d="M17 3l2 2 3-1-1 3 1 3-3-1-2 1-1-3-1-2z" fill="#d87cf0"/><circle cx="39" cy="4" r="1.700" fill="#3fc26a"/><circle cx="43" cy="27" r="1.800" fill="#f6a93b"/><circle cx="4" cy="11" r="1.800" fill="#cfe6f6"/><circle cx="7" cy="6" r="1.400" fill="#cfe6f6"/><circle cx="52" cy="5" r="1.500" fill="#cfe6f6"/>
                <circle cx="10" cy="15.500" r=".8" fill="#123"/><circle cx="31" cy="7.500" r=".7" fill="#123"/>
            </svg>
        </label>
        <nav class="flex">
            <button aria-label="Cortana" class="w-[41px] flex items-center justify-center"><svg class="w-[14px] h-[14px]" viewBox="0 0 14 14"><circle cx="7" cy="7" r="5.600" fill="none" stroke="#fff" stroke-width="1.800"/></svg></button>
            <button aria-label="Task view" class="w-[41px] flex items-center justify-center"><svg class="w-[15px] h-[14px]" viewBox="0 0 15 14" fill="none" stroke="#fff" stroke-width="1.100"><path d="M1 4h8v6H1zM1 0v2h8V0M1 14v-2h8v2M12.500 0v14M11 4h3v3h-3z"/></svg></button>
            <button aria-label="Amazon" class="w-[41px] flex items-center justify-center"><span class="w-5 h-5 rounded-[3px] bg-white text-black font-bold text-[17px] leading-[15px] relative">a<svg class="absolute bottom-[2px] left-[3px] w-[14px] h-1" viewBox="0 0 14 4"><path d="M0 0q7 5 13 1" fill="none" stroke="#f90" stroke-width="1.500"/></svg></span></button>
            <button aria-label="Chrome" class="w-[41px] flex items-center justify-center"><span class="w-[33px] h-full pt-[2px] flex items-center justify-center border-b-2 border-[#f3c9a0]"><svg class="w-[21px] h-5" viewBox="0 0 21 20"><circle cx="9" cy="10" r="9" fill="#fbc116"/><path d="M9 10L1.200 5.500A9 9 0 0 1 17.500 6.500z" fill="#e33b2e"/><path d="M9 10L1.200 5.500A9 9 0 0 0 8 19l4-6z" fill="#2da94f"/><circle cx="9" cy="10" r="4.200" fill="#fff"/><circle cx="9" cy="10" r="3.300" fill="#3f7fe8"/><circle cx="15.500" cy="14.500" r="5.500" fill="#1c1f6b"/><path d="M12 12l5 5M14 16l4-4" stroke="#d33"/><path d="M12 12l3 0 0 4z" fill="#eee"/></svg></span></button>
            <button aria-label="Microsoft Store" class="w-[41px] flex items-center justify-center"><svg class="w-5 h-5" viewBox="0 0 20 20"><path d="M6 5V1.500h8V5" fill="none" stroke="#2aa5e8" stroke-width="2"/><path d="M0 4h20v13q0 3-3 3H3q-3 0-3-3z" fill="#f5f5f5"/><path d="M6.500 8h3v3h-3z" fill="#f25022"/><path d="M10.500 8h3v3h-3z" fill="#7fba00"/><path d="M6.500 12h3v3h-3z" fill="#00a4ef"/><path d="M10.500 12h3v3h-3z" fill="#ffb900"/></svg></button>
            <button aria-label="Mail" class="w-[41px] flex items-center justify-center"><svg class="w-[21px] h-5" viewBox="0 0 21 20"><path d="M0 8L10.500 1 21 8v11H0z" fill="#1467b8"/><path d="M0 8h21L10.500 15z" fill="#e8f4fb"/><path d="M0 8l10.500 7L21 8v11H0z" fill="#2ea3ea"/><path d="M0 19l10.500-8L21 19z" fill="#2390dc"/><path d="M0 19V8l13 11z" fill="#44b8f4"/></svg></button>
            <button aria-label="Remote desktop" class="w-[41px] flex items-center justify-center"><svg class="w-[21px] h-[18px]" viewBox="0 0 21 18"><path d="M7 0l12 4-1 8-11-3z" fill="#3b9ce0" stroke="#9cc" stroke-width=".7"/><path d="M7 9l11 3-3 1-10-2z" fill="#ddd"/><path d="M2 13l8 2 4 1-6 2-8-3z" fill="#c9d3d8"/></svg></button>
            <button aria-label="Edge" class="w-[41px] flex items-center justify-center"><svg class="w-[21px] h-[21px]" viewBox="0 0 21 21"><circle cx="10.500" cy="10.500" r="10" fill="url(#edgeBlue)"/><path d="M1 8Q3 .5 11 .5q9 .5 9.500 8.500-.5 5-5.500 5-4 0-3-3Q12 6 6.500 6 3 6 1 8z" fill="#4fd08a"/><path d="M1 8Q4 1.500 11 1q-4 4-4 9 0 8 8 10-8 2-13-5z" fill="#1f8fdc"/><path d="M9 9q0 7 10 6-4 6-9 4.500-4-3-1-10.500z" fill="#0f4f9a"/></svg></button>
            <button aria-label="Document" class="w-[41px] flex items-center justify-center"><svg class="w-[14px] h-[18px]" viewBox="0 0 14 18"><path d="M0 0h11l3 3v15H0z" fill="#f6f6f6"/><path d="M2 3h6v1.500H2zM2 6h10M2 8.500h10M2 11h5M2 13.500h5" stroke="#7ea8cf" fill="#3a7fc4"/><path d="M8 10h4.500v5H8z" fill="#58a0dc"/></svg></button>
            <button aria-label="File Explorer" class="w-[41px] flex items-center justify-center"><svg class="w-[18px] h-4" viewBox="0 0 18 16"><path d="M0 1h7l2 2h9v13H0z" fill="#e8a820"/><path d="M0 5h18v11H0z" fill="#ffd75e"/><path d="M4 16V9h10v7h-3v-4H7v4z" fill="#3f8fd8"/></svg></button>
            <button aria-label="Photos" class="w-[41px] flex items-center justify-center"><svg class="w-[18px] h-[14px]" viewBox="0 0 18 14"><path d="M0 0h18v14H0z" fill="#eee"/><path d="M1.500 1.500h15v11h-15z" fill="#7db4e6"/><path d="M1.500 7q5-1 8 2 4 0 7-1v4.500h-15z" fill="#234a56"/><path d="M1.500 4q8 0 15 2v1h-15z" fill="#d8ecf8"/></svg></button>
            <button aria-label="Control Panel" class="w-[41px] flex items-center justify-center"><svg class="w-[18px] h-[14px]" viewBox="0 0 18 14"><path d="M0 0h18v14H0z" fill="#3f9fdd"/><path d="M1 1h16v12H1z" fill="#7fcaf5"/><circle cx="5.500" cy="6" r="3" fill="#1e78c2"/><path d="M5.500 6V3a3 3 0 0 1 3 3z" fill="#fff"/><path d="M10 9h1.500V5H10zM12.500 9H14V3h-1.500z" fill="#f08a24"/><path d="M3 11h12" stroke="#fff"/></svg></button>
            <button aria-label="Fusion 360" class="w-10 flex items-center justify-center bg-[#4e5a62] border-b-2 border-[#f3c9a0]"><svg class="w-[18px] h-5"><use href="#fusion"/></svg></button>
        </nav>
        <div class="ml-auto flex items-center">
            <button class="flex items-center text-[11px] gap-[7px]">
                <svg class="w-[19px] h-[19px]" viewBox="0 0 19 19"><circle cx="8" cy="8" r="7.500" fill="#f8b42e"/><path d="M4 18Q0 17 1 13t4-3q3-5 8-1 4 1 4 5t-4 4z" fill="#d4e8f8"/><circle cx="16" cy="16" r="3" fill="#e0142c"/></svg>
                <span>88°F</span><span>Partly sunny</span>
            </button>
            <button aria-label="Hidden icons" class="ml-3"><svg class="w-[11px] h-[7px]" viewBox="0 0 11 7"><path d="M.5 6.500l5-5 5 5" fill="none" stroke="#fff" stroke-width="1.200"/></svg></button>
            <button aria-label="Dropbox" class="ml-2"><svg class="w-[14px] h-[14px]" viewBox="0 0 14 14"><path d="M4.500 0l3 2-3 2-3-2zM10.500 0l3 2-3 2-3-2zM4.500 4l3 2-3 2-3-2zM10.500 4l3 2-3 2-3-2z" fill="#fff"/><path d="M0 6h8v8H0z" fill="#d4101c"/><path d="M2.500 8h3v2h-3v2h3" fill="none" stroke="#fff"/></svg></button>
            <button class="ml-[5px] w-12 text-center text-[9px] leading-[15px]">6:50 PM<br>6/8/2022</button>
            <button aria-label="Notifications" class="ml-3"><svg class="w-[15px] h-[15px]" viewBox="0 0 15 15"><path d="M1 1h13v10H9.500L7.500 14l-2-3H1z" fill="none" stroke="#fff" stroke-width="1.200"/></svg></button>
            <span class="ml-[17px] mr-[2px] w-px h-8 bg-[#5a666e]"></span>
        </div>
    </footer>

    <script>
        const byId = (id) => document.getElementById(id);

        // sketch list
        const locked = [75, 90, 96, 98, 99, 100, 101, 103];
        const visible = [75, 96, 99, 100, 101, 103];
        let rows = '';
        for (let n = 72; n <= 103; n++) {
            const selected = n === 103;
            const label = selected ? 'bg-[#0696d7] text-white font-bold pr-2' : 'bg-[#f2f2f2] pr-[7px]';
            rows += `<li class="h-5 flex items-center">
                <button aria-label="Toggle visibility" class="h-[17px] w-[21px] pl-[2px] bg-[#f2f2f2] flex items-center"><svg class="w-[14px] h-[10px]"><use href="#${visible.includes(n) ? 'eye' : 'eyeOff'}"/></svg></button>
                <button class="h-[17px] flex items-center ${label}"><svg class="w-4 h-4 ml-px mr-[11px]"><use href="#${locked.includes(n) ? 'sketchLock' : 'sketch'}"/></svg>Sketch${n}</button>
            </li>`;
        }
        byId('sketches').innerHTML = rows;

        // timeline features: c copy, m move, s sketch, e extrude, p pattern, f fillet
        const icons = { c: 'copy', m: 'move', s: 'sketch', e: 'extrude', p: 'pattern', f: 'fillet' };
        const steps = 'cmmsesempcmpcmpcmpcmpcmpcmpcmpcmpmsesefsesesefsesemmsesemssesesssseSsese';
        byId('timeline').innerHTML = [...steps].map((s) => {
            const active = s === 'S' ? 'bg-[#0696d7]' : '';
            return `<li class="w-5"><button aria-label="${icons[s.toLowerCase()]}" class="w-5 h-5 flex items-center justify-center ${active}"><svg class="${s === 'm' ? 'w-3 h-3' : 'w-4 h-4'}"><use href="#${icons[s.toLowerCase()]}"/></svg></button><div class="h-[6px] border-b-2 border-[#cdcdcd] flex justify-center"><span class="w-px h-full bg-[#bdbdbd]"></span></div></li>`;
        }).join('');

        // ground grid, five minor cells per major one
        let minor = '', major = '';
        for (let i = -100; i < 90; i++) {
            const y = 420 + i * 10.16;
            const d = `M0 ${y}L1600 ${y + 1600 * 0.572}`;
            i % 5 ? minor += d : major += d;
        }
        for (let i = -200; i < 50; i++) {
            const y = 779 + i * 3.38;
            const d = `M0 ${y}L1600 ${y - 102}`;
            i % 5 ? minor += d : major += d;
        }
        byId('gridMinor').setAttribute('d', minor);
        byId('gridMajor').setAttribute('d', major);

        const poly = (points, extra = '') => `<path d="M${points.map((p) => p.join(' ')).join('L')}z" ${extra}/>`;

        // roof slots
        let html = '';
        for (let k = 0; k < 18; k++) {
            const x = k * 11.85, y = k * 6.83;
            html += poly([[575.5 + x, 240 + y], [856 + x, 222 + y], [862 + x, 226 + y], [582.5 + x, 244 + y]]);
            html += poly([[856 + x, 222 + y], [862 + x, 226 + y], [856 + x, 226.5 + y]], 'fill="#777580"');
        }
        byId('roofSlots').innerHTML = html;

        html = '';
        for (let k = 0; k < 18; k++) {
            const x = 556.3 + k * 11.9, y = 267 + k * 6.8;
            html += poly([[x, y], [x + 6.5, y + 4], [x + 6.5, y + 210], [x, y + 206]]);
            html += poly([[x, y + 205], [x + 6.5, y + 208], [x + 6.5, y + 210], [x, y + 206]], 'fill="#8a887c"');
        }
        byId('sideSlots').innerHTML = html;

        html = '';
        for (let k = 0; k < 10; k++) {
            const x = 773.5 + k * 31.7, y = 377 - k * 1.97;
            html += poly([[x, y], [x + 21, y - 1], [x + 21, y + 213], [x, y + 214]], 'fill="#2f315b"');
            html += poly([[x, y], [x + 4, y], [x + 4, y + 211], [x, y + 214]], 'fill="#45466f"');
            html += poly([[x + 14.5, y - 1], [x + 21, y - 1], [x + 21, y + 213], [x + 14.5, y + 211]], 'fill="#494a74"');
            html += poly([[x, y + 214], [x + 4, y + 211], [x + 14.5, y + 211], [x + 21, y + 213]], 'fill="#55534f"');
        }
        byId('frontSlots').innerHTML = html;

        html = '';
        for (let k = 0; k < 16; k++) {
            const x = 379 + k * 11.8, y = 374 + k * 6.85;
            html += poly([[x, y], [x + 300, y - 19], [x + 306, y - 15], [x + 7, y + 4]]);
        }
        byId('backRoofSlots').innerHTML = html;

        html = '';
        for (let k = 0; k < 16; k++) {
            const x = 358 + k * 13.45, y = 392 + k * 7.67;
            html += poly([[x, y], [x + 7, y + 4], [x + 7, y + 160], [x, y + 160]]);
        }
        byId('backSideSlots').innerHTML = html;

        // notches under the sliding wall
        byId('wheels').innerHTML = [317, 357, 397, 437, 474, 508, 548, 588].map((x) => {
            const y = 762 - (x - 293) * 0.0625;
            return `<path d="M${x - 5} ${y + 1}v-4h3v3h5v-3h3v4z" fill="#fdfdfd"/><path d="M${x - 3} ${y - 3}h6l-3 4z" fill="#111"/>`;
        }).join('');

        // plant: light stems below, dark blades above
        let stems = '', blades = '';
        for (let i = 0; i <= 44; i++) {
            const t = i / 44 * 2 - 1;
            const bx = 803 + t * 38, by = 656 - t * t * 4;
            const mx = 803 + t * 47, my = 637 - t * t * 2;
            const tx = 803 + t * 54, ty = 612 + t * t * 8 + (i % 3) * 2;
            stems += `M${bx} ${by}L${mx} ${my}`;
            blades += `M${mx - 1} ${my}L${tx} ${ty}L${mx + 1} ${my}z`;
        }
        byId('plant').innerHTML = `<path d="M758 626Q803 612 848 626L846 636Q803 644 760 636z" fill="#172225"/><path d="${stems}" stroke="#87928e" stroke-width="1.100"/><path d="${blades}" fill="#111b1e" stroke="#111b1e" stroke-width=".7"/>`;

        // front stools: left, width, top ellipse centre, bottom
        byId('stools').innerHTML = [[608, 67, 731, 789], [727, 66, 749, 804], [807, 66, 744, 804], [886, 67, 739, 796]].map(([x, w, y, b]) =>
            `<path d="M${x} ${y}V${b}Q${x + 6} ${b + 6} ${x + w / 2} ${b + 6}T${x + w} ${b}V${y}z" fill="url(#stoolG)" stroke="#2c140b" stroke-width=".8"/><ellipse cx="${x + w / 2}" cy="${y}" rx="${w / 2}" ry="6" fill="#914f34" stroke="#2c140b" stroke-width=".9"/>`
        ).join('');
    </script>
</body>
</html>
